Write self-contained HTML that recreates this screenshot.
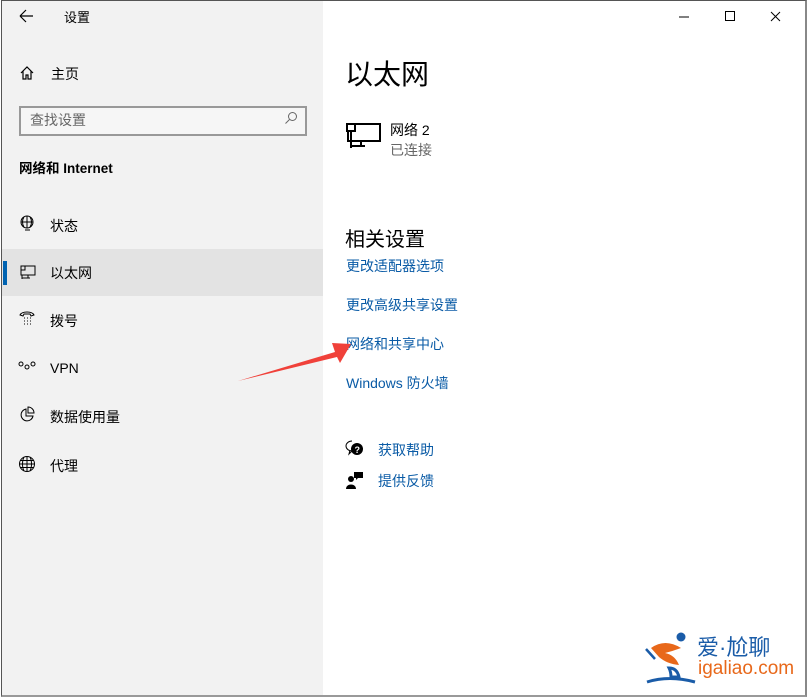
<!DOCTYPE html>
<html><head><meta charset="utf-8"><style>
*{margin:0;padding:0;box-sizing:border-box}
body{width:808px;height:698px;background:#fff;font-family:"Liberation Sans","Noto Sans CJK SC",sans-serif;position:relative;overflow:hidden;color:#000}
.frame{position:absolute;left:1px;top:0;width:806px;height:697px;border:1px solid #555;border-right:2px solid #888;border-bottom:2px solid #999;z-index:5}
.side{position:absolute;left:2px;top:1px;width:321px;height:695px;background:#f2f2f2}
.t{position:absolute;font-size:14px;white-space:nowrap}
.sel{position:absolute;left:2px;top:249px;width:321px;height:47px;background:#e3e3e3}
.bar{position:absolute;left:3px;top:261px;width:4px;height:24px;background:#0063b1}
.search{position:absolute;left:19px;top:106px;width:288px;height:30px;border:2px solid #999;background:#f6f6f6}
.link{color:#0a5ba6}
svg{position:absolute}
</style></head><body>
<div class="side"></div>
<div class="sel"></div><div class="bar"></div>
<svg style="left:18px;top:8px" width="16" height="16"><path d="M2 8h13M2 8l6-6M2 8l6 6" stroke="#000" stroke-width="1.2" fill="none"/></svg>
<div class="t" style="left:64px;top:7px;font-size:13px">设置</div>
<svg style="left:19px;top:65px" width="16" height="16"><path d="M2 8l6-6 6 6M4 6v8h3v-4h2v4h3V6" stroke="#000" stroke-width="1.2" fill="none"/></svg>
<div class="t" style="left:51px;top:64px">主页</div>
<div class="search"></div>
<div class="t" style="left:30px;top:110px;color:#666">查找设置</div>
<svg style="left:284px;top:111px" width="14" height="14"><circle cx="8.5" cy="5.5" r="4" stroke="#666" fill="none"/><path d="M5.5 8.5l-4 4" stroke="#666"/></svg>
<div class="t" style="left:19px;top:157px;font-weight:bold;font-size:13.5px">网络和 Internet</div>
<svg style="left:19px;top:215px" width="18" height="18"><circle cx="8" cy="7" r="6" stroke="#000" fill="none"/><path d="M2 7h12M8 1v12M5 2c-2 3-2 7 0 10M11 2c2 3 2 7 0 10M6 15h5" stroke="#000" fill="none"/></svg>
<div class="t" style="left:50px;top:216px">状态</div>
<svg style="left:19px;top:264px" width="18" height="16"><rect x="2" y="2" width="14" height="9" stroke="#000" fill="none"/><rect x="2" y="2" width="4" height="4" stroke="#000" fill="none"/><path d="M3 11v4M3 14h8M9 11v3" stroke="#000"/></svg>
<div class="t" style="left:50px;top:263px">以太网</div>
<svg style="left:19px;top:310px" width="16" height="16"><path d="M1 5c2-4 12-4 14 0l-3 1-1-2H5L4 6z" stroke="#000" fill="none"/><path d="M5 8h1M8 8h1M11 8h1M5 11h1M8 11h1M11 11h1M5 14h1M8 14h1M11 14h1" stroke="#000"/></svg>
<div class="t" style="left:50px;top:311px">拨号</div>
<svg style="left:18px;top:361px" width="18" height="12"><circle cx="3" cy="3" r="2" stroke="#000" fill="none"/><circle cx="9" cy="6" r="2" stroke="#000" fill="none"/><circle cx="15" cy="3" r="2" stroke="#000" fill="none"/></svg>
<div class="t" style="left:50px;top:360px">VPN</div>
<svg style="left:18px;top:406px" width="18" height="18"><path d="M8 3a6 6 0 1 0 7 7H8z" stroke="#000" fill="none"/><path d="M10 1v6h6a6 6 0 0 0-6-6z" stroke="#000" fill="none"/></svg>
<div class="t" style="left:50px;top:407px">数据使用量</div>
<svg style="left:18px;top:455px" width="18" height="18"><circle cx="9" cy="9" r="7.5" stroke="#000" fill="none"/><path d="M1.5 9h15M9 1.5v15M6 2c-2 4-2 10 0 14M12 2c2 4 2 10 0 14M2.5 5.5h13M2.5 12.5h13" stroke="#000" fill="none"/></svg>
<div class="t" style="left:50px;top:456px">代理</div>

<svg style="left:674px;top:9px" width="110" height="16"><path d="M5 8h10" stroke="#000"/><rect x="51.5" y="2.5" width="9" height="9" stroke="#000" fill="none"/><path d="M97 3l9 9M106 3l-9 9" stroke="#000"/></svg>

<div class="t" style="left:345px;top:53px;font-size:28px">以太网</div>
<svg style="left:345px;top:122px" width="36" height="28"><rect x="3" y="2" width="32" height="17" stroke="#000" stroke-width="2" fill="none"/><rect x="2" y="2" width="8" height="7" stroke="#000" stroke-width="2" fill="#fff"/><path d="M6 9v17M6 24h14M16 19v6" stroke="#000" stroke-width="2"/></svg>
<div class="t" style="left:390px;top:120px">网络 2</div>
<div class="t" style="left:390px;top:140px;color:#666">已连接</div>
<div class="t" style="left:345px;top:223px;font-size:20px">相关设置</div>
<div class="t link" style="left:346px;top:256px">更改适配器选项</div>
<div class="t link" style="left:346px;top:295px">更改高级共享设置</div>
<div class="t link" style="left:346px;top:334px">网络和共享中心</div>
<div class="t link" style="left:346px;top:373px">Windows 防火墙</div>
<svg style="left:345px;top:440px" width="20" height="18"><path d="M7 1a6 5 0 1 0 0 10l-3 3 1-4" stroke="#000" fill="none"/><circle cx="12" cy="9" r="6" fill="#000"/><text x="9.5" y="13" font-size="9" fill="#fff" font-family="Liberation Sans" font-weight="bold">?</text></svg>
<div class="t link" style="left:378px;top:440px">获取帮助</div>
<svg style="left:345px;top:471px" width="20" height="18"><circle cx="6" cy="8" r="3" fill="#000"/><path d="M1 18c0-6 10-6 10 0z" fill="#000"/><path d="M9 1h9v6h-5l-2 2v-2H9z" fill="#000"/></svg>
<div class="t link" style="left:378px;top:471px">提供反馈</div>

<svg style="left:236px;top:336px" width="120" height="50"><path d="M2 45L99 16 96 7 115 8 104 27 101 21z" fill="#f0413a"/></svg>

<svg style="left:645px;top:628px" width="52" height="58"><path d="M6 20q14-10 30 0-8 3-16 5 10 2 14 12-12-1-20-8z" fill="#e8681a"/><circle cx="36" cy="9" r="4.5" fill="#1a5ca8"/><path d="M24 40q8 0 10 9l-8 0q0-5-2-9zM2 54q22-7 48 0" stroke="#1a5ca8" stroke-width="3" fill="none"/><path d="M1 21l9 10" stroke="#1a5ca8" stroke-width="2.5"/></svg>
<div class="t" style="left:697px;top:630px;font-size:22px;color:#1a5ca8">爱·尬聊</div>
<div class="t" style="left:698px;top:658px;font-size:19px;color:#e8681a">igaliao.com</div>
<div class="frame"></div>
</body></html>
